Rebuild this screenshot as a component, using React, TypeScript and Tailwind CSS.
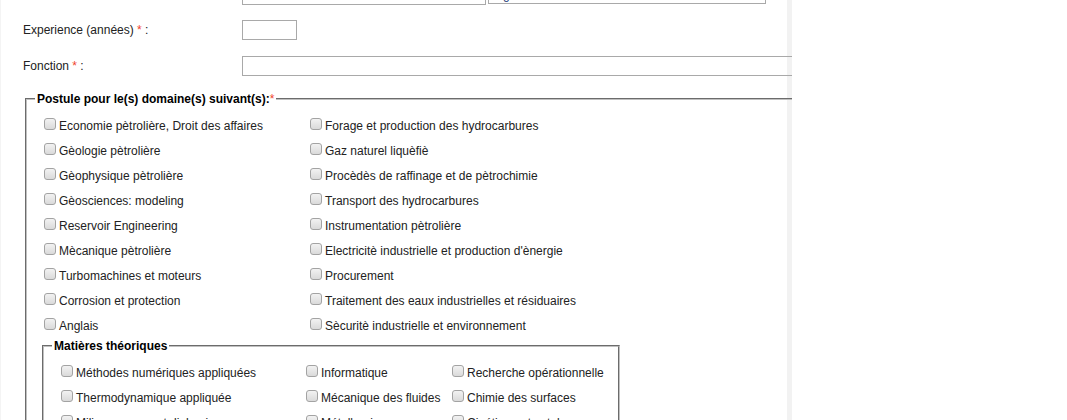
import React from 'react';

const domaines: string[][] = [
  ['Economie pètrolière, Droit des affaires', 'Forage et production des hydrocarbures'],
  ['Gèologie pètrolière', 'Gaz naturel liquèfiè'],
  ['Gèophysique pètrolière', 'Procèdès de raffinage et de pètrochimie'],
  ['Gèosciences: modeling', 'Transport des hydrocarbures'],
  ['Reservoir Engineering', 'Instrumentation pètrolière'],
  ['Mècanique pètrolière', "Electricitè industrielle et production d'ènergie"],
  ['Turbomachines et moteurs', 'Procurement'],
  ['Corrosion et protection', 'Traitement des eaux industrielles et résiduaires'],
  ['Anglais', 'Sècuritè industrielle et environnement'],
];

const matieres: string[][] = [
  ['Méthodes numériques appliquées', 'Informatique', 'Recherche opérationnelle'],
  ['Thermodynamique appliquée', 'Mécanique des fluides', 'Chimie des surfaces'],
  ['Milieux poreux et diphasiques', 'Métallurgie', 'Cinétique et catalyse'],
];

function Box() {
  return (
    <span className="mt-[5px] mr-[3px] h-[12px] w-[12px] shrink-0 self-start rounded-[3px] border border-[#a3a3a3] bg-linear-to-b from-[#f2f2f2] to-[#dadada]" />
  );
}

function Check({ label, width }: { label: string; width: string }) {
  return (
    <div className={`flex h-[25px] shrink-0 items-center ${width}`}>
      <Box />
      <span className="whitespace-nowrap">{label}</span>
    </div>
  );
}

function Req() {
  return <span className="font-normal text-[#f0442e]">*</span>;
}

export default function App() {
  return (
    <div className="h-[420px] w-[1067px] overflow-hidden bg-white font-['Liberation_Sans',Arial,sans-serif] text-[12px] text-[#222]">
      <div className="h-[420px] w-[792px] overflow-hidden border-l border-[#f4f4f4]">
        <div className="flex h-full w-[791px] flex-col border-r-[5px] border-[#f2f2f2]">
          {/* top row, cut off */}
          <div className="-mt-[16px] flex h-[20px] shrink-0 pl-[22px]">
            <div className="w-[219px] shrink-0" />
            <div className="h-[21px] w-[244px] shrink-0 border border-[#a9a9a9]" />
            <div className="ml-[2px] h-[20px] w-[278px] shrink-0 border border-[#a9a9a9] pl-[4px] leading-[20px] text-[#1c3d7a]">
              Ingénieur
            </div>
          </div>

          <div className="mt-[16px] flex h-[20px] shrink-0 items-center pl-[22px]">
            <div className="w-[219px] shrink-0">
              Experience (années) <Req /> :
            </div>
            <div className="h-[20px] w-[55px] shrink-0 border border-[#a9a9a9]" />
          </div>

          <div className="mt-[16px] flex h-[20px] shrink-0 items-center pl-[22px]">
            <div className="w-[219px] shrink-0">
              Fonction <Req /> :
            </div>
            <div className="h-[20px] w-[700px] shrink-0 border border-[#a9a9a9]" />
          </div>

          <fieldset className="mt-[16px] ml-[24px] w-[900px] shrink-0 border-2 border-[#c0c0c0] pt-[7px] pb-[10px] pl-[8px] [border-style:groove]">
            <legend className="px-[2px] leading-[14px] font-bold text-black">
              Postule pour le(s) domaine(s) suivant(s):<Req />
            </legend>
            <div className="ml-[9px]">
              {domaines.map(([a, b]) => (
                <div key={a} className="flex">
                  <Check label={a} width="w-[266px]" />
                  <Check label={b} width="" />
                </div>
              ))}
            </div>

            <fieldset className="mt-[1px] ml-[7px] w-[578px] border-2 border-[#c0c0c0] pt-[7px] pb-[10px] pl-[8px] [border-style:groove]">
              <legend className="px-[2px] leading-[14px] font-bold text-black">Matières théoriques</legend>
              <div className="ml-[9px]">
                {matieres.map(([a, b, c]) => (
                  <div key={a} className="flex">
                    <Check label={a} width="w-[245px]" />
                    <Check label={b} width="w-[146px]" />
                    <Check label={c} width="" />
                  </div>
                ))}
              </div>
            </fieldset>
          </fieldset>
        </div>
      </div>
    </div>
  );
}
